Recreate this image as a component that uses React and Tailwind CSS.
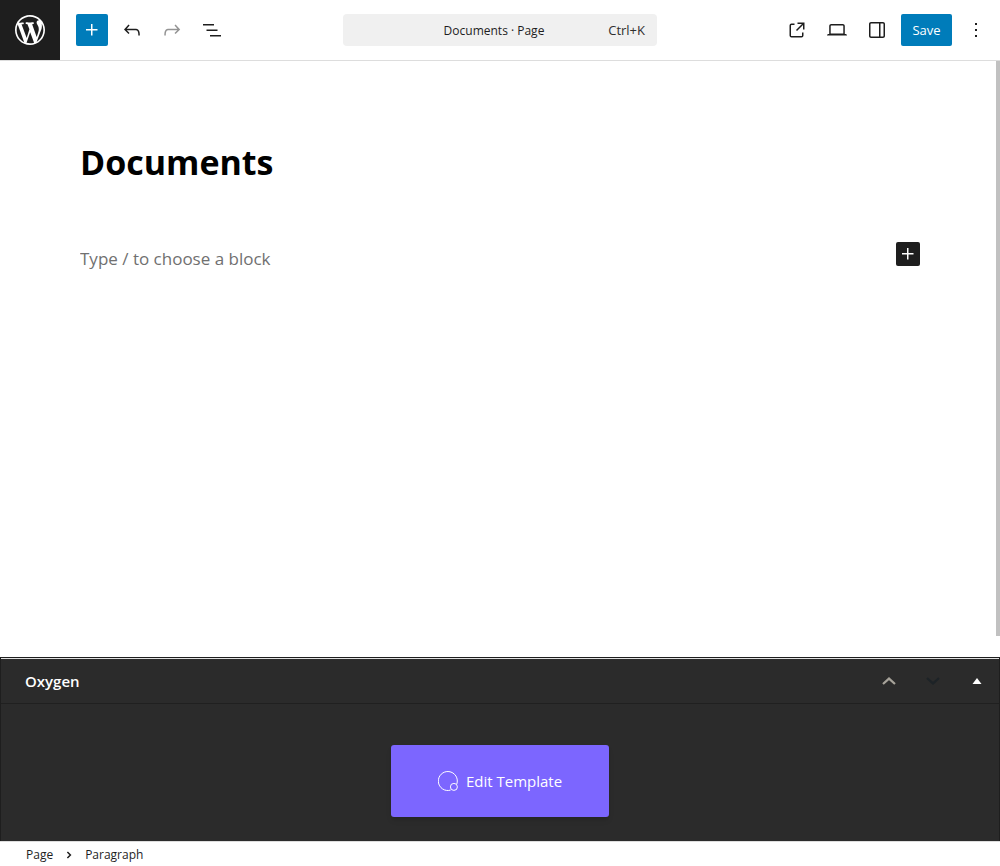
const icons = {
  plus: 'M11 12.5V17.5H12.5V12.5H17.5V11H12.5V6H11V11H6V12.5H11Z',
  undo: 'M18.3 11.7c-.6-.6-1.4-.9-2.3-.9H6.7l2.9-3.3-1.1-1-4.5 5L8.5 16l1-1-2.7-2.7H16c.5 0 .9.2 1.3.5 1 1 1 3.4 1 4.5v.3h1.5v-.2c0-1.5 0-4.3-1.5-5.7z',
  redo: 'M15.6 6.5l-1.1 1 2.9 3.3H8c-.9 0-1.7.3-2.3.9-1.4 1.5-1.4 4.2-1.4 5.6v.2h1.5v-.3c0-1.1 0-3.5 1-4.5.3-.3.7-.5 1.3-.5h9.2L14.5 15l1.1 1.1 4.6-4.6-4.6-5z',
  list: 'M3 6h11v1.5H3V6Zm3.5 5.5h11V13h-11v-1.5ZM21 17H10v1.5h11V17Z',
  external:
    'M19.5 4.5h-7V6h4.44l-5.97 5.97 1.06 1.06L18 7.06v4.44h1.5v-7Zm-13 1a2 2 0 0 0-2 2v10a2 2 0 0 0 2 2h10a2 2 0 0 0 2-2v-3H17v3a.5.5 0 0 1-.5.5h-10a.5.5 0 0 1-.5-.5v-10a.5.5 0 0 1 .5-.5h3V5.5h-3Z',
  desktop:
    'M20.5 16h-.7V8c0-1.1-.9-2-2-2H6.2c-1.1 0-2 .9-2 2v8h-.7c-.8 0-1.5.7-1.5 1.5h20c0-.8-.7-1.5-1.5-1.5zM5.7 8c0-.3.2-.5.5-.5h11.6c.3 0 .5.2.5.5v7.6H5.7V8z',
  drawer:
    'M18 4H6c-1.1 0-2 .9-2 2v12c0 1.1.9 2 2 2h12c1.1 0 2-.9 2-2V6c0-1.1-.9-2-2-2zm-4 14.5H6c-.3 0-.5-.2-.5-.5V6c0-.3.2-.5.5-.5h8v13zm4.5-.5c0 .3-.2.5-.5.5h-2.5v-13H18c.3 0 .5.2.5.5v12z',
  more: 'M13 19h-2v-2h2v2zm0-6h-2v-2h2v2zm0-6h-2V5h2v2z',
  wordpress:
    'M20 10c0-5.51-4.49-10-10-10C4.48 0 0 4.49 0 10c0 5.52 4.48 10 10 10 5.51 0 10-4.48 10-10zM7.78 15.37L4.37 6.22c.55-.02 1.17-.08 1.17-.08.5-.06.44-1.13-.06-1.11 0 0-1.45.11-2.37.11-.18 0-.37 0-.58-.01C4.12 2.69 6.87 1.11 10 1.11c2.33 0 4.45.87 6.05 2.34-.68-.11-1.65.39-1.65 1.58 0 .74.45 1.36.9 2.1.35.61.55 1.36.55 2.46 0 1.49-1.4 5-1.4 5l-3.03-8.37c.54-.02.82-.17.82-.17.5-.05.44-1.25-.06-1.22 0 0-1.44.12-2.38.12-.87 0-2.33-.12-2.33-.12-.5-.03-.56 1.2-.06 1.22l.92.08 1.26 3.41zM17.41 10c.24-.64.74-1.87.43-4.25.7 1.29 1.05 2.71 1.05 4.25 0 3.29-1.73 6.24-4.4 7.78.97-2.59 1.94-5.2 2.92-7.78zM6.1 18.09C3.12 16.65 1.11 13.53 1.11 10c0-1.3.23-2.48.72-3.59C3.25 10.3 4.67 14.2 6.1 18.09zm4.03-6.63l2.58 6.98c-.86.29-1.76.45-2.71.45-.79 0-1.57-.11-2.29-.33.81-2.38 1.62-4.74 2.42-7.10z',
}

function Icon({ name, viewBox = '0 0 24 24', className = 'size-6' }) {
  return (
    <svg viewBox={viewBox} fill="currentColor" aria-hidden="true" className={className}>
      <path d={icons[name]} />
    </svg>
  )
}

function ToolButton({ icon, label, disabled }) {
  return (
    <button
      type="button"
      aria-label={label}
      disabled={disabled}
      className="flex size-8 items-center justify-center rounded-xs disabled:text-[#949494]"
    >
      <Icon name={icon} />
    </button>
  )
}

function Header() {
  return (
    <header className="grid grid-cols-[1fr_minmax(0,314px)_1fr] items-center border-b border-[#dddddd]">
      <div className="flex items-center gap-4">
        <a href="#pages" aria-label="View pages" className="flex size-15 items-center justify-center bg-[#1e1e1e] text-white">
          <Icon name="wordpress" viewBox="-2 -2 24 24" className="size-9" />
        </a>
        <div className="flex gap-2">
          <button type="button" aria-label="Block inserter" className="flex size-8 items-center justify-center rounded-xs bg-[#007cba] text-white">
            <Icon name="plus" />
          </button>
          <ToolButton icon="undo" label="Undo" />
          <ToolButton icon="redo" label="Redo" disabled />
          <ToolButton icon="list" label="Document overview" />
        </div>
      </div>

      <button type="button" className="grid h-8 grid-cols-[1fr_auto_1fr] items-center rounded bg-[#f0f0f0] px-3 pt-0.5">
        <span className="col-start-2 pr-3 text-xs">Documents · Page</span>
        <span className="text-right text-[13px] text-[#2f2f2f]">Ctrl+K</span>
      </button>

      <div className="flex items-center justify-end gap-2 pr-2">
        <ToolButton icon="external" label="View page" />
        <ToolButton icon="desktop" label="Preview" />
        <ToolButton icon="drawer" label="Settings" />
        <button type="button" className="h-8 w-[51px] rounded-xs bg-[#007cba] pt-0.5 text-center text-[13px] text-white">
          Save
        </button>
        <ToolButton icon="more" label="Options" />
      </div>
    </header>
  )
}

function Editor() {
  return (
    <main className="flex grow">
      <div className="grow pt-[76px] pr-[76px] pl-20">
        <h1 className="text-[34px] leading-[50px] font-bold text-black">Documents</h1>
        <div className="mt-[55px] flex items-start justify-between">
          <input
            type="text"
            aria-label="Empty block"
            placeholder="Type / to choose a block"
            className="h-8 min-w-0 grow text-[17px] outline-none placeholder:text-[#707070]"
          />
          <button type="button" aria-label="Add block" className="flex size-6 items-center justify-center rounded-xs bg-[#1e1e1e] text-white">
            <Icon name="plus" />
          </button>
        </div>
      </div>
      <div className="mb-[21px] w-1 shrink-0 bg-[#c1c1c1]" />
    </main>
  )
}

function OxygenPanel() {
  return (
    <section className="border-x border-t border-[#1e1e1e] bg-[#2b2b2b] text-white">
      <div className="flex h-[46px] items-center border-t border-b border-t-[#e0e0e0] border-b-[#202020] pl-6">
        <h2 className="grow text-[15px] font-semibold">Oxygen</h2>
        <button type="button" aria-label="Move up" className="flex h-9 w-11 items-center justify-center text-[#a7a39a]">
          <svg viewBox="0 0 14 8" fill="none" stroke="currentColor" strokeWidth="2.2" className="h-2 w-3.5">
            <path d="M1 7l6-5.4L13 7" />
          </svg>
        </button>
        <button type="button" aria-label="Move down" disabled className="flex h-9 w-11 items-center justify-center text-[#1d2327]">
          <svg viewBox="0 0 14 8" fill="none" stroke="currentColor" strokeWidth="2.2" className="h-2 w-3.5">
            <path d="M1 1l6 5.4L13 1" />
          </svg>
        </button>
        <button type="button" aria-label="Toggle panel" className="flex h-9 w-11 items-center justify-center">
          <svg viewBox="0 0 10 6" fill="currentColor" className="h-1.5 w-2.5">
            <path d="M5 0l4.5 6h-9z" />
          </svg>
        </button>
      </div>
      <div className="flex justify-center pt-[41px] pb-6">
        <button type="button" className="flex h-18 w-[218px] items-center justify-center gap-2 rounded-[3px] bg-[#7c66ff] text-[15px] shadow-md">
          <svg viewBox="0 0 20 20" fill="none" stroke="currentColor" className="size-5 shrink-0">
            <path d="M12.6 19.1A9.5 9.5 0 1 1 18.8 13.1" />
            <circle cx="15.9" cy="15.9" r="3.5" />
          </svg>
          Edit Template
        </button>
      </div>
    </section>
  )
}

export default function App() {
  return (
    <div className="flex min-h-screen flex-col bg-white font-['Open_Sans','Noto_Sans',sans-serif] text-[#1e1e1e]">
      <Header />
      <Editor />
      <OxygenPanel />
      <footer className="flex h-[25px] items-center gap-3 border-t border-[#dddddd] pt-0.5 pl-[26px] text-xs">
        <a href="#page">Page</a>
        <svg viewBox="0 0 8 8" fill="none" stroke="currentColor" strokeWidth="1.5" className="size-2">
          <path d="M2.4 1l3 3-3 3" />
        </svg>
        <span>Paragraph</span>
      </footer>
    </div>
  )
}
